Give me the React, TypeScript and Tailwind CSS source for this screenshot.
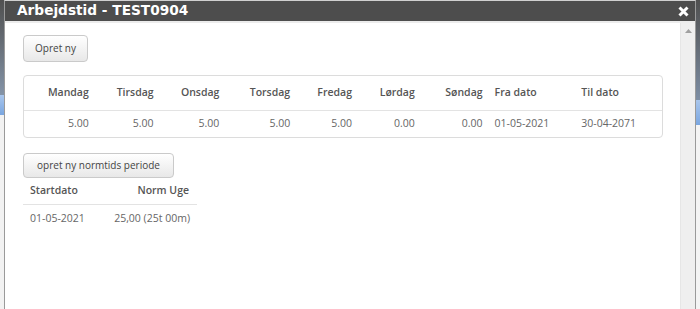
import React from "react";

const cols = [
  { label: "Mandag", val: "5.00", w: 73, right: true },
  { label: "Tirsdag", val: "5.00", w: 65, right: true },
  { label: "Onsdag", val: "5.00", w: 66, right: true },
  { label: "Torsdag", val: "5.00", w: 71, right: true },
  { label: "Fredag", val: "5.00", w: 62, right: true },
  { label: "Lørdag", val: "0.00", w: 63, right: true },
  { label: "Søndag", val: "0.00", w: 68, right: true },
  { label: "Fra dato", val: "01-05-2021", w: 87, right: false },
  { label: "Til dato", val: "30-04-2071", w: 85, right: false },
];

export default function App() {
  return (
    <div className="w-[700px] h-[309px] overflow-hidden flex bg-white font-['Open_Sans',sans-serif]">
      {/* page background left */}
      <div className="w-[4px] flex flex-col">
        <div className="h-[95px] bg-gradient-to-b from-[#505050] to-[#8494a8]" />
        <div className="h-[20px] bg-gradient-to-b from-[#a9c6ec] to-[#7aa6e0]" />
        <div className="flex-1 bg-[#f2f2f2]" />
      </div>
      {/* dialog */}
      <div className="w-[692px] flex flex-col border-x border-t border-[#9a9a9a] border-t-[#d0d0d0] bg-white">
        <div className="h-[20px] bg-[#4d4d4d] flex items-center justify-between pl-[12px] pr-[6px]">
          <span className="text-white font-bold text-[13.7px] font-['DejaVu_Sans',sans-serif] leading-none">
            Arbejdstid - TEST0904
          </span>
          <svg width="11" height="11" viewBox="0 0 11 11">
            <path d="M1.5 1.5 L9.5 9.5 M9.5 1.5 L1.5 9.5" stroke="#ffffff" strokeWidth="3" strokeLinecap="butt" />
          </svg>
        </div>
        <div className="h-[2px] bg-[#ececec]" />
        <div className="flex-1 flex min-h-0">
          <div className="flex-1 pl-[18px] pt-[12px] flex flex-col items-start">
            <button className="h-[27px] w-[65px] rounded-[4px] border border-[#cacaca] bg-gradient-to-b from-white to-[#e8e8e8] text-[10px] text-[#444] flex items-center justify-center">
              Opret ny
            </button>
            <div className="mt-[13px] w-[640px] h-[63px] rounded-[4px] border border-[#dcdcdc] flex flex-col text-[10.5px] text-[#666]">
              <div className="h-[35px] flex border-b border-[#e3e3e3] font-semibold text-[#555] items-center">
                {cols.map((c) => (
                  <div
                    key={c.label}
                    style={{ width: c.w }}
                    className={c.right ? "text-right pr-[8px]" : "text-left pl-[4px]"}
                  >
                    {c.label}
                  </div>
                ))}
              </div>
              <div className="flex-1 flex items-center">
                {cols.map((c) => (
                  <div
                    key={c.label}
                    style={{ width: c.w }}
                    className={c.right ? "text-right pr-[8px]" : "text-left pl-[4px]"}
                  >
                    {c.val}
                  </div>
                ))}
              </div>
            </div>
            <button className="mt-[15px] h-[25px] w-[151px] rounded-[4px] border border-[#cacaca] bg-gradient-to-b from-white to-[#e8e8e8] text-[10px] text-[#444] flex items-center justify-center">
              opret ny normtids periode
            </button>
            <div className="w-[174px] text-[10.5px] text-[#666]">
              <div className="h-[27px] flex items-center justify-between pl-[7px] pr-[8px] border-b border-[#e3e3e3] font-semibold text-[#555]">
                <span>Startdato</span>
                <span>Norm Uge</span>
              </div>
              <div className="h-[28px] flex items-center justify-between pl-[7px] pr-[7px]">
                <span>01-05-2021</span>
                <span>25,00 (25t 00m)</span>
              </div>
            </div>
          </div>
          <div className="w-[15px] bg-[#efefef] border-l border-[#e6e6e6] flex justify-center pt-[6px]">
            <svg width="7" height="4" viewBox="0 0 7 4">
              <path d="M3.5 0 L7 4 L0 4 Z" fill="#a0a0a0" />
            </svg>
          </div>
        </div>
      </div>
      {/* page background right */}
      <div className="flex-1 flex flex-col">
        <div className="h-[100px] bg-gradient-to-b from-[#505050] to-[#7d8ea4]" />
        <div className="h-[25px] bg-gradient-to-b from-[#a9c6ec] to-[#7aa6e0]" />
        <div className="flex-1 bg-[#f4f4f4]" />
      </div>
    </div>
  );
}
